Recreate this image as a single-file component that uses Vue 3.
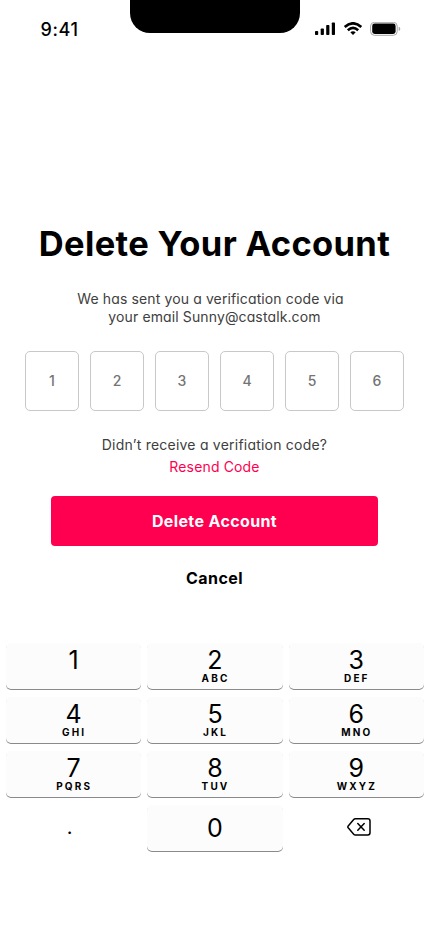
<script setup>
const digits = [1, 2, 3, 4, 5, 6]
const keys = [
  { n: '1', l: '' },
  { n: '2', l: 'ABC' },
  { n: '3', l: 'DEF' },
  { n: '4', l: 'GHI' },
  { n: '5', l: 'JKL' },
  { n: '6', l: 'MNO' },
  { n: '7', l: 'PQRS' },
  { n: '8', l: 'TUV' },
  { n: '9', l: 'WXYZ' },
]
</script>

<template>
  <div class="screen">
    <header class="status">
      <time class="time">9:41</time>
      <div class="notch"></div>
      <svg class="icons" width="86" height="16" viewBox="0 0 86 16">
        <rect x="0" y="9" width="3.2" height="4" rx="0.8" />
        <rect x="5.7" y="6.4" width="3.2" height="6.6" rx="0.8" />
        <rect x="11.2" y="3" width="3.2" height="10" rx="0.8" />
        <rect x="16.8" y="0.4" width="3.2" height="12.6" rx="0.8" />
        <g fill="none" stroke="#000" stroke-width="2.6">
          <path d="M29.7 5 Q38 -2.4 46.3 5" />
          <path d="M32.8 8.2 Q38 3.6 43.2 8.2" />
        </g>
        <path d="M35.3 10.3 Q38 8.1 40.7 10.3 L38 13 Z" />
        <rect x="55.6" y="0.3" width="26.6" height="13" rx="3.8" fill="none" stroke="#a6a6a6" />
        <rect x="57.2" y="1.6" width="23.4" height="10.4" rx="2.4" />
        <path d="M83.7 4.8 Q85.3 5.3 85.3 6.9 Q85.3 8.5 83.7 9 Z" fill="#a6a6a6" />
      </svg>
    </header>

    <main class="content">
      <h1 class="title">Delete Your Account</h1>
      <p class="intro">We has sent you a verification code via<br /><span class="mail">your email Sunny@castalk.com</span></p>
      <div class="code">
        <span v-for="d in digits" :key="d" class="digit">{{ d }}</span>
      </div>
      <p class="question">Didn’t receive a verifiation code?</p>
      <a class="resend">Resend Code</a>
      <button class="delete">Delete Account</button>
      <button class="cancel">Cancel</button>
    </main>

    <section class="pad">
      <button v-for="k in keys" :key="k.n" class="key">
        <span class="num">{{ k.n }}</span>
        <span class="letters">{{ k.l }}</span>
      </button>
      <button class="key plain"><span class="dot">.</span></button>
      <button class="key zero"><span class="num">0</span></button>
      <button class="key plain">
        <svg class="back" width="24" height="18" viewBox="0 0 24 18" fill="none" stroke="#000" stroke-width="1.5" stroke-linecap="round" stroke-linejoin="round">
          <path d="M8.3 .8H20.8Q23 .8 23 3V14.8Q23 17 20.8 17H8.3Q7.4 17 6.7 16.2L1.2 9.8Q.5 8.9 1.2 8L6.7 1.6Q7.4 .8 8.3 .8Z" />
          <path d="M10.8 5.6L17.2 12.2M17.2 5.6L10.8 12.2" />
        </svg>
      </button>
    </section>
  </div>
</template>

<style>
body {
  background: #fff;
}
</style>

<style scoped>
.screen {
  width: 430px;
  height: 932px;
  overflow: hidden;
  background: #fff;
  color: #000;
  font-family: Inter, sans-serif;
}
button {
  border: 0;
  padding: 0;
  font-family: inherit;
  color: inherit;
}
.status {
  display: grid;
  grid-template-columns: 130px 170px 130px;
  height: 220px;
  align-items: start;
}
.time {
  padding: 18px 0 0 40.5px;
  font-size: 18px;
  line-height: 24px;
  font-weight: 550;
  letter-spacing: 0.6px;
}
.notch {
  height: 33px;
  background: #000;
  border-radius: 0 0 20px 20px;
}
.icons {
  margin: 22px 0 0 15px;
}
.content {
  display: flex;
  flex-direction: column;
  align-items: center;
  height: 423px;
  font-feature-settings: 'cv11' 1;
}
.title {
  margin: 0 1px 0 0;
  font-size: 34.5px;
  line-height: 48px;
  font-weight: 700;
  letter-spacing: 0.33px;
  white-space: nowrap;
}
.intro {
  margin: 22px 9px 0 0;
  font-size: 14px;
  line-height: 18px;
  letter-spacing: 0.12px;
  color: #404040;
  text-align: center;
  white-space: nowrap;
}
.mail {
  padding-left: 8px;
}
.code {
  display: flex;
  gap: 11px;
  margin: 25px 1px 0 0;
}
.digit {
  box-sizing: border-box;
  width: 54px;
  height: 60px;
  border: 1px solid #c8c8c8;
  border-radius: 5px;
  line-height: 58px;
  text-align: center;
  font-size: 14px;
  font-weight: 500;
  color: #747474;
}
.question {
  margin: 23px 1px 0 0;
  font-size: 14px;
  line-height: 22px;
  letter-spacing: 0.22px;
  color: #404040;
}
.resend {
  margin-right: 1px;
  font-size: 14px;
  line-height: 22px;
  letter-spacing: 0.15px;
  color: #ff0050;
}
.delete {
  width: 327px;
  height: 50px;
  margin: 18px 1px 0 0;
  border-radius: 4px;
  background: #ff0050;
  color: #fff;
  font-size: 16px;
  font-weight: 700;
  letter-spacing: 0.37px;
}
.cancel {
  height: 24px;
  margin: 20px 1px 0 0;
  background: none;
  font-size: 16px;
  font-weight: 700;
  letter-spacing: 0.4px;
}
.pad {
  display: grid;
  grid-template-columns: repeat(3, 1fr);
  gap: 8px 6px;
  padding: 0 6px;
}
.key {
  display: flex;
  flex-direction: column;
  align-items: center;
  height: 46px;
  border-radius: 5px;
  background: #fcfcfc;
  box-shadow: 0 1px 0 #898a8d;
}
.num {
  padding-top: 4px;
  font-size: 25px;
  line-height: 26px;
  font-weight: 400;
}
.letters {
  margin: 1px 0 0 1px;
  font-size: 10px;
  line-height: 8px;
  font-weight: 650;
  letter-spacing: 2.1px;
}
.zero {
  justify-content: center;
}
.zero .num {
  padding: 0;
}
.plain {
  justify-content: center;
  background: none;
  box-shadow: none;
}
.dot {
  margin-right: 8px;
  padding-bottom: 3px;
  font-size: 20px;
  line-height: 24px;
}
.back {
  margin: 0 -6px 2px 0;
}
</style>
